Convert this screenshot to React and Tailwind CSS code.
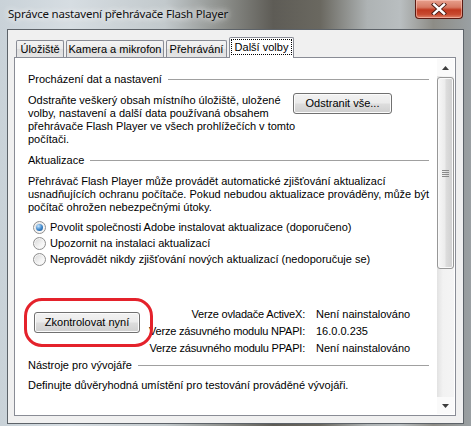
import React from 'react';

function Heading({ children }) {
  return (
    <div className="flex items-center gap-[6px] h-[13px] leading-[13px]">
      <span className="whitespace-nowrap">{children}</span>
      <span className="flex-1 h-px bg-[#a0a0a0]" />
    </div>
  );
}

function Button({ children, className }) {
  return (
    <div
      className={`flex items-center justify-center rounded-[3px] border border-[#707070] bg-[linear-gradient(#f2f2f2_0%,#ebebeb_48%,#dddddd_52%,#cfcfcf_100%)] shadow-[inset_0_0_0_1px_#fbfbfb] whitespace-nowrap ${className}`}
    >
      {children}
    </div>
  );
}

function Radio({ checked, children }) {
  return (
    <div className="flex items-center h-[16px] pl-[5px] gap-[4px]">
      <span className="w-[13px] h-[13px] rounded-full border border-[#8f8f8f] bg-[linear-gradient(135deg,#d4d4d4,#f4f4f4_60%,#ffffff)] shadow-[inset_0_0_0_1px_#f5f5f5] flex items-center justify-center">
        {checked && (
          <span className="w-[7px] h-[7px] rounded-full bg-[radial-gradient(circle_at_35%_30%,#c6e6ff,#3a83c8_55%,#1b4f86)]" />
        )}
      </span>
      <span className="whitespace-nowrap">{children}</span>
    </div>
  );
}

function Tab({ children, className }) {
  return (
    <div
      className={`h-[17px] flex items-center justify-center border border-b-0 border-[#898c95] rounded-t-[2px] bg-[linear-gradient(#f3f3f3,#ebebeb_50%,#dedede_51%,#e5e5e5)] whitespace-nowrap ${className}`}
    >
      {children}
    </div>
  );
}

const versions = [
  ['Verze ovladače ActiveX:', 'Není nainstalováno'],
  ['Verze zásuvného modulu NPAPI:', '16.0.0.235'],
  ['Verze zásuvného modulu PPAPI:', 'Není nainstalováno'],
];

export default function App() {
  return (
    <div className="relative w-[471px] h-[426px] overflow-hidden bg-[linear-gradient(90deg,#c9d2d8_0%,#d6dde2_15%,#c2c9cc_35%,#8a8c88_48%,#5e5c56_58%,#6a6860_68%,#aeb3b4_78%,#b9bec0_85%,#8d8c86_92%,#9aa0a3_100%)] font-['Liberation_Sans',Arial,sans-serif] text-[11px] text-black">
      {/* title bar */}
      <div className="h-[29px] flex items-center pl-[8px] pb-[1px] text-[11.5px] tracking-[-0.2px] font-['Noto_Sans',sans-serif] text-[#111] [text-shadow:0_0_6px_#ffffff,0_0_10px_rgba(255,255,255,0.8)]">
        Správce nastavení přehrávače Flash Player
      </div>

      {/* close button */}
      <div className="absolute top-0 right-[8px] w-[48px] h-[19px] rounded-b-[4px] border border-t-0 border-[#5a1a12] bg-[linear-gradient(#e7a08d_0%,#d77a64_40%,#c0381f_55%,#c84a30_80%,#e0866c_100%)] shadow-[inset_0_0_0_1px_rgba(255,210,200,0.5)] flex items-center justify-center">
        <svg width="16" height="12" viewBox="0 0 16 12">
          <path d="M3 1.5 L13 10.5 M13 1.5 L3 10.5" stroke="#4a1c14" strokeWidth="4.2" strokeLinecap="square" />
          <path d="M3 1.5 L13 10.5 M13 1.5 L3 10.5" stroke="#ffffff" strokeWidth="2.4" strokeLinecap="square" />
        </svg>
      </div>

      {/* client area */}
      <div className="ml-[7px] w-[457px] h-[395px] border border-[#5d6369] bg-[#f0f0f0] pt-[7px]">
        {/* tabs */}
        <div className="flex items-end h-[20px] ml-[8px]">
          <Tab className="w-[48px]">Úložiště</Tab>
          <Tab className="w-[98px] ml-[2px]">Kamera a mikrofon</Tab>
          <Tab className="w-[61px] ml-[2px]">Přehrávání</Tab>
          <div className="relative z-10 ml-[2px] w-[65px] h-[21px] -mb-px border border-b-0 border-[#898c95] rounded-t-[2px] bg-white p-[1px] pb-[3px]">
            <div className="h-full border border-dotted border-black flex items-center justify-center whitespace-nowrap">
              Další volby
            </div>
          </div>
        </div>

        {/* panel */}
        <div className="ml-[6px] w-[442px] h-[359px] border border-[#898c95] bg-white p-px flex">
          {/* content */}
          <div className="flex-1 pl-[12px] pr-[8px] pt-[14px] leading-[13px]">
            <Heading>Procházení dat a nastavení</Heading>
            <div className="mt-[8px] flex">
              <div className="w-[265px] whitespace-nowrap">
                Odstraňte veškerý obsah místního úložiště, uložené
                <br />
                volby, nastavení a další data používaná obsahem
                <br />
                přehrávače Flash Player ve všech prohlížečích v tomto
                <br />
                počítači.
              </div>
              <Button className="w-[99px] h-[21px] -mt-[1px]">Odstranit vše...</Button>
            </div>

            <div className="mt-[8px]">
              <Heading>Aktualizace</Heading>
            </div>
            <div className="mt-[8px] whitespace-nowrap">
              Přehrávač Flash Player může provádět automatické zjišťování aktualizací
              <br />
              usnadňujících ochranu počítače. Pokud nebudou aktualizace prováděny, může být
              <br />
              počítač ohrožen nebezpečnými útoky.
            </div>
            <div className="mt-[5px]">
              <Radio checked>Povolit společnosti Adobe instalovat aktualizace (doporučeno)</Radio>
              <Radio>Upozornit na instalaci aktualizací</Radio>
              <Radio>Neprovádět nikdy zjišťování nových aktualizací (nedoporučuje se)</Radio>
            </div>

            {/* versions */}
            <div className="relative mt-[39px] flex">
              <div className="w-[112px] pt-[6px] pl-[6px]">
                <Button className="w-[106px] h-[21px]">Zkontrolovat nyní</Button>
              </div>
              <div className="grid grid-cols-[165px_auto] gap-x-[11px]">
                {versions.map(([label, value]) => (
                  <React.Fragment key={label}>
                    <div className="h-[17px] leading-[17px] flex justify-end whitespace-nowrap tracking-[-0.2px]">{label}</div>
                    <div className="h-[17px] leading-[17px] whitespace-nowrap">{value}</div>
                  </React.Fragment>
                ))}
              </div>
              <div className="absolute left-[-4px] top-[-8px] w-[129px] h-[49px] rounded-[18px] border-[3px] border-[#e4222b]" />
            </div>

            <div className="mt-[2px]">
              <Heading>Nástroje pro vývojáře</Heading>
            </div>
            <div className="mt-[7px] whitespace-nowrap">
              Definujte důvěryhodná umístění pro testování prováděné vývojáři.
            </div>
          </div>

          {/* scrollbar */}
          <div className="w-[17px] flex flex-col bg-[linear-gradient(90deg,#e2e2e2,#f2f2f2_35%,#f4f4f4)]">
            <div className="h-[17px] flex items-center justify-center bg-[#fafafa]">
              <svg width="7" height="4" viewBox="0 0 7 4">
                <path d="M0 4 L3.5 0 L7 4 Z" fill="#3c3c3c" />
              </svg>
            </div>
            <div className="flex-1">
              <div className="mt-[1px] h-[192px] border border-[#979797] rounded-[3px] bg-[linear-gradient(90deg,#f7f7f7,#ececec_45%,#dcdcdc_55%,#cfcfcf)] shadow-[inset_0_0_0_1px_#fafafa] flex flex-col items-center justify-center gap-[1px]">
                <span className="w-[7px] h-px bg-[#8a8a8a]" />
                <span className="w-[7px] h-px bg-[#8a8a8a]" />
                <span className="w-[7px] h-px bg-[#8a8a8a]" />
                <span className="w-[7px] h-px bg-[#8a8a8a]" />
              </div>
            </div>
            <div className="h-[17px] flex items-center justify-center bg-[#fafafa]">
              <svg width="7" height="4" viewBox="0 0 7 4">
                <path d="M0 0 L7 0 L3.5 4 Z" fill="#3c3c3c" />
              </svg>
            </div>
          </div>
        </div>
      </div>
    </div>
  );
}
